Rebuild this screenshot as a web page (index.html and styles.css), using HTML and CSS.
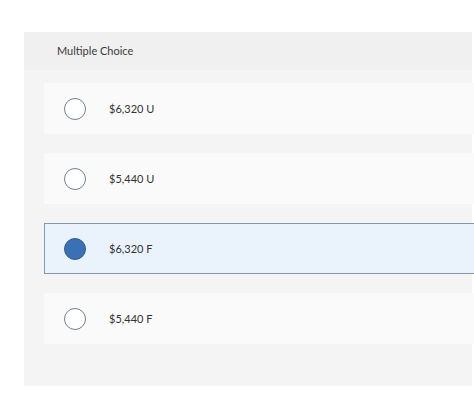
FILE: index.html
```
<!DOCTYPE html>
<html>
<head>
<meta charset="utf-8">
<link rel="stylesheet" href="styles.css">
</head>
<body>
<div class="panel">
  <div class="panel-head">Multiple Choice</div>
  <div class="panel-body">
    <div class="option"><span class="radio"></span><span class="label">$6,320 U</span></div>
    <div class="option"><span class="radio"></span><span class="label">$5,440 U</span></div>
    <div class="option selected"><span class="radio"></span><span class="label">$6,320 F</span></div>
    <div class="option"><span class="radio"></span><span class="label">$5,440 F</span></div>
  </div>
</div>
</body>
</html>
```
FILE: styles.css
```
html, body {
  margin: 0;
  padding: 0;
  overflow: hidden;
  background: #ffffff;
}
body {
  padding: 32px 2px 0 24px;
  font-family: Lato, "Open Sans", sans-serif;
  color: #333333;
}
.panel {
  background: #f4f4f4;
  height: 354px;
}
.panel-head {
  background: #f0f0f0;
  height: 38px;
  box-sizing: border-box;
  padding: 12px 0 0 33px;
  font-size: 11px;
  line-height: 14px;
  color: #3a3a3a;
}
.panel-body {
  padding: 13px 0 0 20px;
  margin-right: -12px;
  display: flex;
  flex-direction: column;
  gap: 19px;
}
.option {
  height: 51px;
  box-sizing: border-box;
  background: #fafafa;
  display: flex;
  align-items: center;
  padding-left: 19px;
  border: 1px solid transparent;
}
.option.selected {
  background: #eaf2fc;
  border-color: #8397ae;
}
.radio {
  width: 22px;
  height: 22px;
  box-sizing: border-box;
  border-radius: 50%;
  border: 1.5px solid #6f8190;
  background: #ffffff;
  flex: none;
}
.option.selected .radio {
  background: #3a70b4;
  border-color: #2e5c96;
}
.label {
  margin-left: 23px;
  font-size: 11px;
  color: #333333;
}
```
